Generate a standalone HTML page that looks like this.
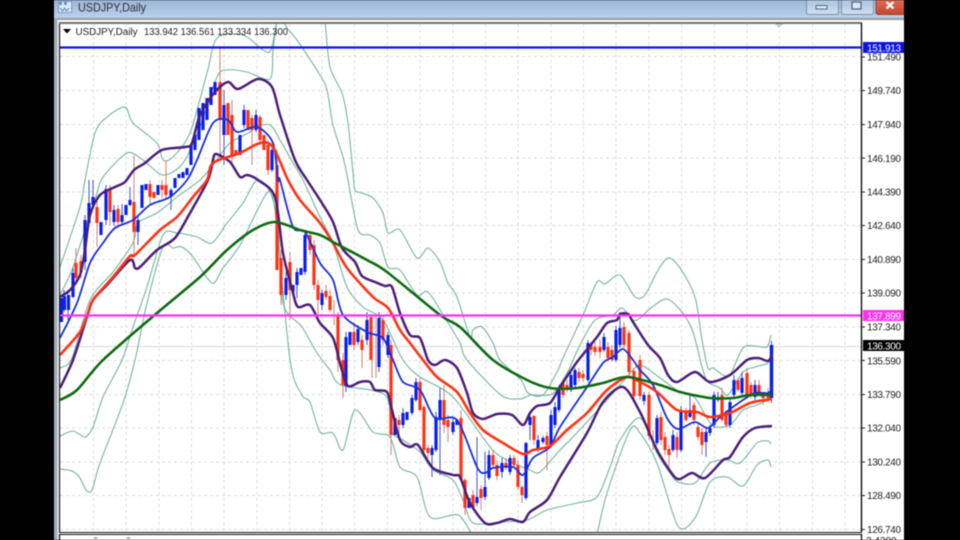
<!DOCTYPE html>
<html><head><meta charset="utf-8"><style>
html,body{margin:0;padding:0;background:#000;width:960px;height:540px;overflow:hidden}
#w{position:absolute;left:0;top:0;width:960px;height:540px;filter:blur(0.5px)}
svg{position:absolute;left:0;top:0}
text{font-family:"Liberation Sans",sans-serif}
</style></head><body><div id="w">
<svg width="960" height="540" viewBox="0 0 960 540">
<defs>
<linearGradient id="tb" x1="0" y1="0" x2="0" y2="1"><stop offset="0" stop-color="#9cb6d8"/><stop offset="1" stop-color="#b9d1ec"/></linearGradient>
<linearGradient id="bt" x1="0" y1="0" x2="0" y2="1"><stop offset="0" stop-color="#a9c3e0"/><stop offset="1" stop-color="#cfdff0"/></linearGradient>
<linearGradient id="cl" x1="0" y1="0" x2="0" y2="1"><stop offset="0" stop-color="#d8705c"/><stop offset="1" stop-color="#c8452c"/></linearGradient>
<clipPath id="c"><rect x="60" y="24" width="801" height="508"/></clipPath>
</defs>
<rect x="0" y="0" width="960" height="540" fill="#000"/>
<rect x="54" y="0" width="850" height="540" fill="#fff"/>
<rect x="54" y="0" width="850" height="18" fill="url(#tb)"/>
<rect x="54" y="18" width="850" height="2" fill="#9a9a9a"/>
<rect x="54" y="18" width="3.5" height="522" fill="#a3aeb8"/>
<!-- title icon -->
<rect x="58.5" y="1.5" width="13" height="11" fill="#dfeaf6" stroke="#7c9cc0"/>
<path d="M60 8l2.500 3 2-3 2 3 2.500-3" fill="none" stroke="#5b86b8"/>
<rect x="59" y="2" width="3" height="3" fill="#6a92c0"/><rect x="64" y="2" width="3" height="3" fill="#6a92c0"/>
<text x="78" y="11.500" font-size="12" fill="#2a2f36" textLength="68" lengthAdjust="spacingAndGlyphs">USDJPY,Daily</text>
<!-- buttons -->
<rect x="806.500" y="-1" width="32" height="15.500" rx="2" fill="url(#bt)" stroke="#7f93a8"/>
<rect x="816" y="5.500" width="11" height="3.500" fill="#dfe8f2" stroke="#56687c"/>
<rect x="841.500" y="-1" width="32" height="15.500" rx="2" fill="url(#bt)" stroke="#7f93a8"/>
<rect x="852" y="2" width="9" height="7" fill="#dfe8f2" stroke="#56687c" stroke-width="1.300"/>
<rect x="876" y="-1" width="29" height="15.500" rx="2" fill="url(#cl)" stroke="#8e4a3c"/>
<path d="M886.500 2l7 6.500M893.500 2l-7 6.500" stroke="#f4f4f4" stroke-width="2.400" fill="none"/>
<!-- chart frame -->
<rect x="59.500" y="23" width="802" height="509" fill="#fff"/>
<!-- grid -->
<g stroke="#dcdcdc" stroke-width="1" stroke-dasharray="3 3" fill="none">
<path d="M60 56.500H861M60 90.500H861M60 124.500H861M60 158H861M60 192H861M60 225.500H861M60 259.500H861M60 293H861M60 327H861M60 360.500H861M60 394.500H861M60 428H861M60 462H861M60 495.500H861M60 529.500H861"/>
<path d="M93.500 24V532M126 24V532M159 24V532M191.500 24V532M224 24V532M257 24V532M289.500 24V532M322 24V532M354.500 24V532M387.500 24V532M420 24V532M453 24V532M485.500 24V532M518 24V532M551 24V532M583.500 24V532M616 24V532M649 24V532M681.500 24V532M714.500 24V532M747 24V532M779.500 24V532M812.500 24V532M845 24V532"/>
</g>
<path d="M60 346.500H861" stroke="#d8d8d8" stroke-width="1"/>
<g clip-path="url(#c)">
<!-- teal bands -->
<g fill="none" stroke="#74b3a2" stroke-width="1.100">
<path class="s" d="M60 267L80 207L85 180L95 133L107 117L125 107L133 123L157 143L163 160L173 157L190 133L207 73L217 38L243 35L263 50L271 50L277 20M325 20L330 67L342 93L348 123L353 173L355 190L362 193L373 198L383 213L388 233L400 230L417 258L428 248L440 262L448 283L457 297L470 337L473 330L482 327L493 343L500 360L521 380L528 393L543 395L558 370L563 358L583 315L597 282L605 284L620 275L635 297L645 295L657 272L668 258L680 268L695 297L702 340L708 368L713 368L723 375L730 375L743 348L755 346L767 347L771 335"/>
<path class="s" d="M60 295L72 270L87 223L97 193L103 177L127 153L143 160L163 175L183 163L200 127L217 77L227 70L247 72L270 79L273 50L277 20M283 20L287 28L297 40L320 75L327 90L333 125L343 157L348 180L358 230L370 235L380 243L388 267L400 270L417 295L428 292L445 318L460 343L467 360L501 395L520 399L531 395L552 394L567 373L580 345L595 320L613 315L622 308L633 320L640 318L652 307L667 299L682 312L693 332L702 367L708 382L720 388L728 395L743 372L755 367L768 363L772 355"/>
<path class="s" d="M60 368L72 358L90 300L113 272L133 243L138 223L157 213L177 197L200 180L213 165L230 143L250 132L253 127L270 125L280 140L293 163L303 180L320 217L333 243L347 287L363 307L383 320L403 360L420 377L453 397L490 447L507 460L530 470L540 472L560 450L573 437L607 400L627 377L640 365L660 378L680 392L695 398L712 425L730 425L743 410L757 405L772 398"/>
<path class="s" d="M60 436L73 431L85 437L93 427L103 397L122 360L133 327L147 287L163 235L177 233L197 237L212 243L227 223L243 203L257 180L270 192L278 225L283 303L302 327L317 353L330 370L341 385L385 395L392 432L403 440L420 452L433 470L453 480L463 500L473 523L500 522L527 520L547 510L577 503L597 497L610 467L620 440L640 418L657 453L670 473L678 482L695 483L710 463L727 460L740 463L757 443L768 441L771 444"/>
<path class="s" d="M60 469L72 471L80 478L86 490L92 490L100 463L123 403L135 360L147 303L163 247L173 248L182 247L193 257L212 283L223 268L240 245L267 193L275 210L290 360L302 395L310 402L320 432L333 433L343 450L355 410L373 432L390 437L400 467L417 477L430 517L458 515L472 535M597 535L607 493L630 430L640 433L657 463L678 526L695 518L710 482L727 477L743 486L757 465L768 460L771 467"/>
</g>
<!-- wicks -->
<path fill="none" stroke="#d9806e" stroke-width="1" d="M76 248V285M81 255V278M97 200V247M110 185V225M118 205V228M134 155V255M150 180V205M162 180V198M166 160V200M220 48V160M232 100V165M252 115V165M260 115V145M268 140V175M277 150V270M281 250V305M290 252V320M310 232V255M314 240V290M318 280V315M326 285V300M330 290V312M334 300V325M338 312V372M343 353V398M354 322V350M362 335V368M372 320V378M376 315V378M383 315V345M391 340V455M399 415V440M420 378V412M424 405V452M428 445V458M444 385V433M448 415V442M461 410V482M465 478V515M473 490V510M481 485V510M493 450V468M497 460V480M506 458V470M514 455V468M518 460V490M522 485V503M534 415V445M547 432V470M563 380V398M567 380V392M579 368V382M583 370V382M591 342V355M595 342V356M600 340V358M608 342V362M612 345V362M624 322V348M629 330V375M634 368V402M640 355V400M649 392V440M653 430V450M661 412V445M665 432V455M669 445V467M677 432V458M686 408V422M694 402V425M698 422V440M702 428V455M722 388V422M726 410V428M738 378V392M747 368V398M751 382V398M759 380V395M763 392V405M768 388V402"/>
<path fill="none" stroke="#3a55d8" stroke-width="1" d="M64 290V312M68 290V320M73 268V298M85 215V270M89 180V225M93 180V205M106 185V225M114 205V226M122 204V224M130 187V206M138 215V245M171 188V210M224 90V165M244 105V128M256 110V132M272 148V172M286 272V300M297 268V298M305 232V275M322 290V310M346 332V392M358 325V345M367 312V345M379 312V372M388 332V358M403 408V428M412 395V415M416 378V402M432 445V477M436 412V452M440 388V475M453 418V435M477 437V506M485 452V500M489 450V480M502 458V478M510 455V475M526 442V500M530 412V440M538 435V452M543 436V444M551 410V448M555 402V428M559 385V412M571 372V392M575 368V388M588 340V382M604 333V352M616 326V362M620 312V348M644 392V405M657 415V445M673 430V452M681 406V452M690 395V418M706 428V457M710 425V436M714 392V428M718 392V402M730 398V428M734 375V398M742 372V396M755 380V400M771.500 341V403"/>
<!-- bodies -->
<path fill="none" stroke="#0a1ee8" stroke-width="3.200" d="M61.500 298V322M64.500 296V310M68.500 295V310M73 273V297M85 220V262M89 203V223M93 197V205M101 222V235M106 189V220M114 210V222M122 215V222M126 205V215M130 200V205M138 220V232M142 185V208M146 184V190M158 185V195M171 190V197M175 178V188M179 174V178M183 172V178M187 168V175M191 145V165M195 135V150M199 108V140M203 103V130M207 98V120M211 87V105M215 82V95M224 105V135M240 135V155M244 110V125M256 115V130M272 150V170M286 278V295M293 285V292M297 272V285M301 268V275M305 235V272M322 293V305M346 337V386M350 332V345M358 329V342M367 320V340M379 318V367M388 335V355M395 418V435M403 413V425M407 412V420M412 398V413M416 382V400M432 448V455M436 417V450M440 400V420M453 422V432M457 420V425M469 498V508M477 497V503M485 487V497M489 455V478M502 463V472M510 458V472M526 443V498M530 417V425M538 440V450M543 438V442M551 415V445M555 407V425M559 388V410M571 375V390M575 370V385M588 343V380M604 337V350M616 330V360M620 328V345M644 395V401M657 418V443M673 435V450M681 410V450M690 410V417M706 432V442M710 428V433M714 395V425M718 397V400M730 402V425M734 380V395M742 378V393M755 385V397"/>
<path fill="none" stroke="#0a1ee8" stroke-width="3.500" d="M771.500 345V398"/>
<path fill="none" stroke="#ff3214" stroke-width="3.200" d="M76 263V278M81 261V272M97 207V223M110 190V212M118 209V222M134 202V232M150 184V197M154 192V198M162 185V190M166 185V195M220 82V120M228 103V135M232 115V155M236 150V155M248 110V130M252 118V130M260 117V140M264 135V150M268 145V170M277 165V270M281 258V295M290 262V290M310 235V250M314 245V285M318 285V300M326 291V297M330 296V310M338 316V360M343 360V385M354 332V345M362 340V350M371 317V360M383 320V340M391 345V435M399 420V425M420 382V410M424 407V450M428 448V453M444 400V425M448 420V427M461 418V480M465 480V508M473 495V508M481 489V498M493 455V465M497 465V476M506 463V468M514 458V465M518 465V487M522 487V495M534 416V440M547 436V445M563 383V395M567 385V390M579 372V378M583 374V378M591 345V350M595 347V352M600 347V352M608 347V358M612 350V360M624 327V345M629 333V372M634 371V396M640 360V396M649 395V436M661 417V440M665 437V450M669 449V455M677 437V450M686 412V420M694 405V420M698 427V437M702 432V445M722 395V420M726 415V425M738 380V390M747 373V395M751 385V395M759 385V392M763 395V398M768 393V398"/>
<!-- lines -->
<path class="s" fill="none" stroke="#1a2fd8" stroke-width="1.800" stroke-linejoin="round" d="M60 338L77 303L90 263L103 243L115 228L133 220L150 205L170 197L187 180L197 160L213 123L228 120L237 132L257 127L273 143L278 180L280 180L293 227L305 232L320 263L333 280L343 315L367 332L383 338L393 360L403 382L420 390L435 418L457 420L477 467L485 473L493 468L513 467L523 475L533 458L550 447L560 427L587 387L603 363L613 357L623 349L633 360L640 370L653 385L667 418L678 429L695 422L708 428L720 417L740 402L755 393L768 393L772 388"/>
<path class="s" fill="none" stroke="#4a1f78" stroke-width="2.500" stroke-linejoin="round" d="M60 297L70 290L80 275L85 250L90 215L100 195L115 187L125 182L134 170L145 163L162 150L185 147L192 143L200 115L215 92L228 82L238 89L258 79L272 87L280 115L295 160L307 180L320 200L333 222L342 248L355 262L362 276L375 282L385 286L392 287L400 313L410 335L420 338L428 360L435 365L445 360L457 368L467 393L473 413L483 419L497 414L512 415L523 425L530 413L537 406L550 403L560 387L577 362L597 337L607 323L617 320L620 314L628 314L633 322L648 345L660 358L668 375L677 382L695 372L710 382L730 375L747 360L758 358L768 361L772 355"/>
<path class="s" fill="none" stroke="#4a1f78" stroke-width="2.500" stroke-linejoin="round" d="M60 388L73 360L87 317L93 300L107 285L130 260L135 268L140 267L157 250L175 238L190 213L208 180L213 160L216 154L230 162L240 177L247 175L258 180L275 197L283 253L293 293L298 307L310 305L320 323L333 338L341 367L348 386L360 382L370 382L375 390L387 392L392 410L400 440L410 447L418 445L433 468L453 475L460 477L470 503L485 523L497 523L510 519L523 522L530 512L547 500L560 477L587 433L603 402L623 387L640 412L657 450L673 475L680 479L692 473L705 478L723 460L730 457L743 437L755 428L772 426"/>
<path class="s" fill="none" stroke="#ff3214" stroke-width="2.600" stroke-linejoin="round" d="M60 355L80 332L88 313L93 300L113 277L130 256L135 255L160 230L177 217L193 197L207 180L213 163L240 153L260 143L273 147L288 180L300 200L320 223L333 243L347 268L373 297L388 308L400 330L410 343L423 360L437 377L457 392L470 413L483 430L503 443L523 454L533 450L550 446L567 430L587 413L607 390L627 377L640 382L657 392L677 410L697 412L710 417L730 413L750 403L772 399"/>
<path class="s" fill="none" stroke="#0f6a14" stroke-width="2.600" stroke-linejoin="round" d="M60 400L77 390L103 360L157 313L200 277L227 250L253 230L275 222L300 230L320 235L333 242L367 260L387 272L440 315L460 327L493 360L527 380L550 388L577 388L603 383L627 377L660 385L680 392L710 398L733 398L750 395L772 395"/>
</g>
<path d="M60 47.500H861" stroke="#0a14e6" stroke-width="2.200"/>
<path d="M60 315.500H861" stroke="#ff30f0" stroke-width="2.200"/>
<path d="M775 24h8l-4 4z" fill="#c8c8c8"/>
<!-- frame lines -->
<path d="M59.500 23.500V532" stroke="#222" stroke-width="1.300"/>
<path d="M59 23H862" stroke="#707070" stroke-width="2"/>
<path d="M861.500 23V532" stroke="#111" stroke-width="1.400"/>
<path d="M59 532.500H862" stroke="#111" stroke-width="1.100"/>
<path d="M59 534.500H862" stroke="#111" stroke-width="1.100"/>
<path d="M59.500 534V540M861.500 534V540" stroke="#111" stroke-width="1.300"/>
<!-- legend -->
<path d="M63 29h8l-4 4.500z" fill="#000"/>
<text x="75.500" y="35" font-size="10" fill="#222" textLength="62" lengthAdjust="spacingAndGlyphs">USDJPY,Daily</text>
<text x="144" y="35" font-size="10" fill="#222" textLength="144" lengthAdjust="spacingAndGlyphs">133.942 136.561 133.334 136.300</text>
<!-- ticks -->
<path stroke="#222" stroke-width="1" d="M862 57h3M862 90.500h3M862 124.500h3M862 158h3M862 192h3M862 225.500h3M862 259.500h3M862 293h3M862 327h3M862 360.500h3M862 394.500h3M862 428h3M862 462h3M862 495.500h3M862 529.500h3"/>
<!-- axis labels -->
<g font-size="10" fill="#222">
<text x="867" y="60.500" textLength="34">151.490</text>
<text x="867" y="94" textLength="34">149.740</text>
<text x="867" y="128" textLength="34">147.940</text>
<text x="867" y="162" textLength="34">146.190</text>
<text x="867" y="195.500" textLength="34">144.390</text>
<text x="867" y="229" textLength="34">142.640</text>
<text x="867" y="263" textLength="34">140.890</text>
<text x="867" y="296.500" textLength="34">139.090</text>
<text x="867" y="330.500" textLength="34">137.340</text>
<text x="867" y="364.500" textLength="34">135.590</text>
<text x="867" y="398" textLength="34">133.790</text>
<text x="867" y="431.500" textLength="34">132.040</text>
<text x="867" y="465.500" textLength="34">130.240</text>
<text x="867" y="499" textLength="34">128.490</text>
<text x="867" y="533" textLength="34">126.740</text>
<text x="866" y="544">2.4290</text>
</g>
<rect x="863" y="42" width="41" height="11" fill="#0a14e6"/>
<text x="867" y="51.500" font-size="10" fill="#fff" textLength="34">151.913</text>
<rect x="863" y="310" width="41" height="11" fill="#ff30f0"/>
<text x="867" y="319.500" font-size="10" fill="#fff" textLength="34">137.899</text>
<rect x="863" y="340" width="41" height="11" fill="#000"/>
<text x="867" y="349.500" font-size="10" fill="#fff" textLength="34">136.300</text>
<path d="M94 538h3M127 538h3" stroke="#555" stroke-width="1"/>
<rect x="904" y="0" width="56" height="540" fill="#000"/>
</svg>
</div>
<script>
document.querySelectorAll('path.s').forEach(function(el){
  var out='';
  el.getAttribute('d').split('M').forEach(function(sub){
    if(!sub)return;
    var p=sub.split('L').map(function(s){return s.trim().split(/\s+/).map(Number);});
    out+='M'+p[0][0]+' '+p[0][1];
    for(var i=0;i<p.length-1;i++){
      var a=p[Math.max(i-1,0)],b=p[i],c=p[i+1],d=p[Math.min(i+2,p.length-1)],t=7;
      out+='C'+(b[0]+(c[0]-a[0])/t).toFixed(1)+' '+(b[1]+(c[1]-a[1])/t).toFixed(1)+' '+(c[0]-(d[0]-b[0])/t).toFixed(1)+' '+(c[1]-(d[1]-b[1])/t).toFixed(1)+' '+c[0]+' '+c[1];
    }
  });
  el.setAttribute('d',out);
});
</script>
</body></html>
